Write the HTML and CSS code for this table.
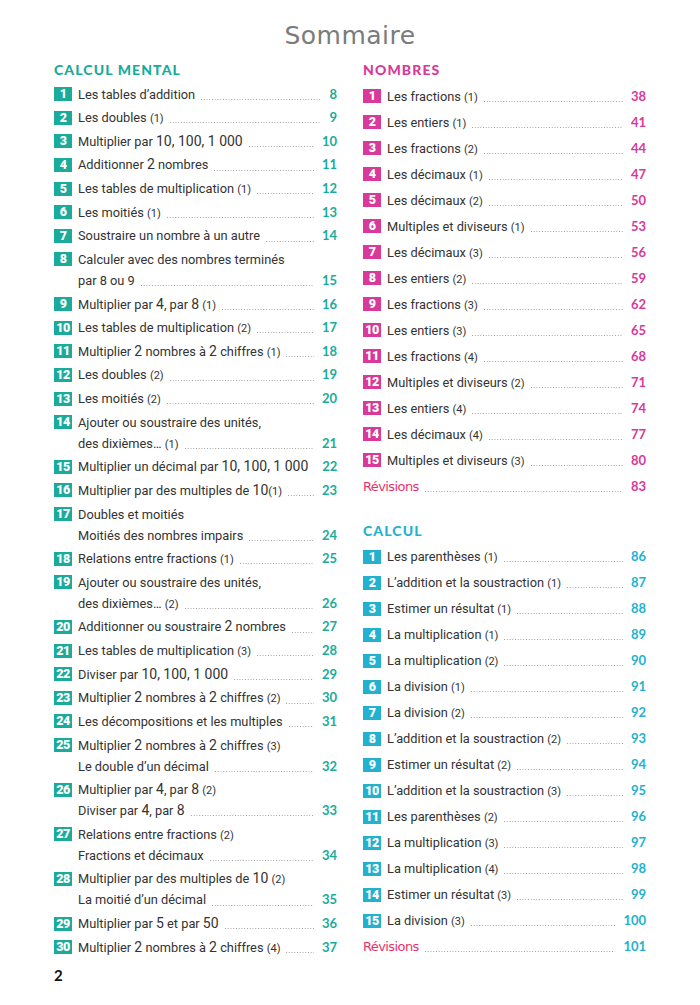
FILE: index.html
```html
<!DOCTYPE html>
<html lang="fr">
<head>
<meta charset="utf-8">
<title>Sommaire</title>
<link rel="stylesheet" href="styles.css">
</head>
<body>
<div class="page">
  <h1 class="title">Sommaire</h1>
  <div class="cols">
    <section class="col mental">
      <h2 class="head">CALCUL MENTAL</h2>
      <ul class="list">
        <li class="item"><span class="badge">1</span><div class="body"><div class="line"><span class="t">Les tables d’addition</span><span class="dots"></span><span class="pg">8</span></div></div></li>
        <li class="item"><span class="badge">2</span><div class="body"><div class="line"><span class="t">Les doubles <small>(1)</small></span><span class="dots"></span><span class="pg">9</span></div></div></li>
        <li class="item"><span class="badge">3</span><div class="body"><div class="line"><span class="t">Multiplier par <span class="n">10, 100, 1 000</span></span><span class="dots"></span><span class="pg">10</span></div></div></li>
        <li class="item"><span class="badge">4</span><div class="body"><div class="line"><span class="t">Additionner <span class="n">2</span> nombres</span><span class="dots"></span><span class="pg">11</span></div></div></li>
        <li class="item"><span class="badge">5</span><div class="body"><div class="line"><span class="t">Les tables de multiplication <small>(1)</small></span><span class="dots"></span><span class="pg">12</span></div></div></li>
        <li class="item"><span class="badge">6</span><div class="body"><div class="line"><span class="t">Les moitiés <small>(1)</small></span><span class="dots"></span><span class="pg">13</span></div></div></li>
        <li class="item"><span class="badge">7</span><div class="body"><div class="line"><span class="t">Soustraire un nombre à un autre</span><span class="dots"></span><span class="pg">14</span></div></div></li>
        <li class="item"><span class="badge">8</span><div class="body"><div class="line"><span class="t">Calculer avec des nombres terminés</span></div><div class="line"><span class="t">par 8 ou 9</span><span class="dots"></span><span class="pg">15</span></div></div></li>
        <li class="item"><span class="badge">9</span><div class="body"><div class="line"><span class="t">Multiplier par <span class="n">4</span>, par <span class="n">8</span> <small>(1)</small></span><span class="dots"></span><span class="pg">16</span></div></div></li>
        <li class="item"><span class="badge">10</span><div class="body"><div class="line"><span class="t">Les tables de multiplication <small>(2)</small></span><span class="dots"></span><span class="pg">17</span></div></div></li>
        <li class="item"><span class="badge">11</span><div class="body"><div class="line"><span class="t">Multiplier <span class="n">2</span> nombres à <span class="n">2</span> chiffres <small>(1)</small></span><span class="dots"></span><span class="pg">18</span></div></div></li>
        <li class="item"><span class="badge">12</span><div class="body"><div class="line"><span class="t">Les doubles <small>(2)</small></span><span class="dots"></span><span class="pg">19</span></div></div></li>
        <li class="item"><span class="badge">13</span><div class="body"><div class="line"><span class="t">Les moitiés <small>(2)</small></span><span class="dots"></span><span class="pg">20</span></div></div></li>
        <li class="item"><span class="badge">14</span><div class="body"><div class="line"><span class="t">Ajouter ou soustraire des unités,</span></div><div class="line"><span class="t">des dixièmes… <small>(1)</small></span><span class="dots"></span><span class="pg">21</span></div></div></li>
        <li class="item"><span class="badge">15</span><div class="body"><div class="line"><span class="t">Multiplier un décimal par <span class="n">10, 100, 1 000</span></span><span class="dots"></span><span class="pg">22</span></div></div></li>
        <li class="item"><span class="badge">16</span><div class="body"><div class="line"><span class="t">Multiplier par des multiples de <span class="n">10</span><small>(1)</small></span><span class="dots"></span><span class="pg">23</span></div></div></li>
        <li class="item"><span class="badge">17</span><div class="body"><div class="line"><span class="t">Doubles et moitiés</span></div><div class="line"><span class="t">Moitiés des nombres impairs</span><span class="dots"></span><span class="pg">24</span></div></div></li>
        <li class="item"><span class="badge">18</span><div class="body"><div class="line"><span class="t">Relations entre fractions <small>(1)</small></span><span class="dots"></span><span class="pg">25</span></div></div></li>
        <li class="item"><span class="badge">19</span><div class="body"><div class="line"><span class="t">Ajouter ou soustraire des unités,</span></div><div class="line"><span class="t">des dixièmes… <small>(2)</small></span><span class="dots"></span><span class="pg">26</span></div></div></li>
        <li class="item"><span class="badge">20</span><div class="body"><div class="line"><span class="t">Additionner ou soustraire <span class="n">2</span> nombres</span><span class="dots"></span><span class="pg">27</span></div></div></li>
        <li class="item"><span class="badge">21</span><div class="body"><div class="line"><span class="t">Les tables de multiplication <small>(3)</small></span><span class="dots"></span><span class="pg">28</span></div></div></li>
        <li class="item"><span class="badge">22</span><div class="body"><div class="line"><span class="t">Diviser par <span class="n">10, 100, 1 000</span></span><span class="dots"></span><span class="pg">29</span></div></div></li>
        <li class="item"><span class="badge">23</span><div class="body"><div class="line"><span class="t">Multiplier <span class="n">2</span> nombres à <span class="n">2</span> chiffres <small>(2)</small></span><span class="dots"></span><span class="pg">30</span></div></div></li>
        <li class="item"><span class="badge">24</span><div class="body"><div class="line"><span class="t">Les décompositions et les multiples</span><span class="dots"></span><span class="pg">31</span></div></div></li>
        <li class="item"><span class="badge">25</span><div class="body"><div class="line"><span class="t">Multiplier <span class="n">2</span> nombres à <span class="n">2</span> chiffres <small>(3)</small></span></div><div class="line"><span class="t">Le double d’un décimal</span><span class="dots"></span><span class="pg">32</span></div></div></li>
        <li class="item"><span class="badge">26</span><div class="body"><div class="line"><span class="t">Multiplier par <span class="n">4</span>, par <span class="n">8</span> <small>(2)</small></span></div><div class="line"><span class="t">Diviser par <span class="n">4</span>, par <span class="n">8</span></span><span class="dots"></span><span class="pg">33</span></div></div></li>
        <li class="item"><span class="badge">27</span><div class="body"><div class="line"><span class="t">Relations entre fractions <small>(2)</small></span></div><div class="line"><span class="t">Fractions et décimaux</span><span class="dots"></span><span class="pg">34</span></div></div></li>
        <li class="item"><span class="badge">28</span><div class="body"><div class="line"><span class="t">Multiplier par des multiples de <span class="n">10</span> <small>(2)</small></span></div><div class="line"><span class="t">La moitié d’un décimal</span><span class="dots"></span><span class="pg">35</span></div></div></li>
        <li class="item"><span class="badge">29</span><div class="body"><div class="line"><span class="t">Multiplier par <span class="n">5</span> et par <span class="n">50</span></span><span class="dots"></span><span class="pg">36</span></div></div></li>
        <li class="item"><span class="badge">30</span><div class="body"><div class="line"><span class="t">Multiplier <span class="n">2</span> nombres à <span class="n">2</span> chiffres <small>(4)</small></span><span class="dots"></span><span class="pg">37</span></div></div></li>
      </ul>
    </section>
    <section class="col right">
      <div class="block nombres">
        <h2 class="head">NOMBRES</h2>
        <ul class="list">
          <li class="item"><span class="badge">1</span><div class="body"><div class="line"><span class="t">Les fractions <small>(1)</small></span><span class="dots"></span><span class="pg">38</span></div></div></li>
          <li class="item"><span class="badge">2</span><div class="body"><div class="line"><span class="t">Les entiers <small>(1)</small></span><span class="dots"></span><span class="pg">41</span></div></div></li>
          <li class="item"><span class="badge">3</span><div class="body"><div class="line"><span class="t">Les fractions <small>(2)</small></span><span class="dots"></span><span class="pg">44</span></div></div></li>
          <li class="item"><span class="badge">4</span><div class="body"><div class="line"><span class="t">Les décimaux <small>(1)</small></span><span class="dots"></span><span class="pg">47</span></div></div></li>
          <li class="item"><span class="badge">5</span><div class="body"><div class="line"><span class="t">Les décimaux <small>(2)</small></span><span class="dots"></span><span class="pg">50</span></div></div></li>
          <li class="item"><span class="badge">6</span><div class="body"><div class="line"><span class="t">Multiples et diviseurs <small>(1)</small></span><span class="dots"></span><span class="pg">53</span></div></div></li>
          <li class="item"><span class="badge">7</span><div class="body"><div class="line"><span class="t">Les décimaux <small>(3)</small></span><span class="dots"></span><span class="pg">56</span></div></div></li>
          <li class="item"><span class="badge">8</span><div class="body"><div class="line"><span class="t">Les entiers <small>(2)</small></span><span class="dots"></span><span class="pg">59</span></div></div></li>
          <li class="item"><span class="badge">9</span><div class="body"><div class="line"><span class="t">Les fractions <small>(3)</small></span><span class="dots"></span><span class="pg">62</span></div></div></li>
          <li class="item"><span class="badge">10</span><div class="body"><div class="line"><span class="t">Les entiers <small>(3)</small></span><span class="dots"></span><span class="pg">65</span></div></div></li>
          <li class="item"><span class="badge">11</span><div class="body"><div class="line"><span class="t">Les fractions <small>(4)</small></span><span class="dots"></span><span class="pg">68</span></div></div></li>
          <li class="item"><span class="badge">12</span><div class="body"><div class="line"><span class="t">Multiples et diviseurs <small>(2)</small></span><span class="dots"></span><span class="pg">71</span></div></div></li>
          <li class="item"><span class="badge">13</span><div class="body"><div class="line"><span class="t">Les entiers <small>(4)</small></span><span class="dots"></span><span class="pg">74</span></div></div></li>
          <li class="item"><span class="badge">14</span><div class="body"><div class="line"><span class="t">Les décimaux <small>(4)</small></span><span class="dots"></span><span class="pg">77</span></div></div></li>
          <li class="item"><span class="badge">15</span><div class="body"><div class="line"><span class="t">Multiples et diviseurs <small>(3)</small></span><span class="dots"></span><span class="pg">80</span></div></div></li>
          <li class="item rev"><div class="body"><div class="line"><span class="t">Révisions</span><span class="dots"></span><span class="pg">83</span></div></div></li>
        </ul>
      </div>
      <div class="block calcul">
        <h2 class="head">CALCUL</h2>
        <ul class="list">
          <li class="item"><span class="badge">1</span><div class="body"><div class="line"><span class="t">Les parenthèses <small>(1)</small></span><span class="dots"></span><span class="pg">86</span></div></div></li>
          <li class="item"><span class="badge">2</span><div class="body"><div class="line"><span class="t">L’addition et la soustraction <small>(1)</small></span><span class="dots"></span><span class="pg">87</span></div></div></li>
          <li class="item"><span class="badge">3</span><div class="body"><div class="line"><span class="t">Estimer un résultat <small>(1)</small></span><span class="dots"></span><span class="pg">88</span></div></div></li>
          <li class="item"><span class="badge">4</span><div class="body"><div class="line"><span class="t">La multiplication <small>(1)</small></span><span class="dots"></span><span class="pg">89</span></div></div></li>
          <li class="item"><span class="badge">5</span><div class="body"><div class="line"><span class="t">La multiplication <small>(2)</small></span><span class="dots"></span><span class="pg">90</span></div></div></li>
          <li class="item"><span class="badge">6</span><div class="body"><div class="line"><span class="t">La division <small>(1)</small></span><span class="dots"></span><span class="pg">91</span></div></div></li>
          <li class="item"><span class="badge">7</span><div class="body"><div class="line"><span class="t">La division <small>(2)</small></span><span class="dots"></span><span class="pg">92</span></div></div></li>
          <li class="item"><span class="badge">8</span><div class="body"><div class="line"><span class="t">L’addition et la soustraction <small>(2)</small></span><span class="dots"></span><span class="pg">93</span></div></div></li>
          <li class="item"><span class="badge">9</span><div class="body"><div class="line"><span class="t">Estimer un résultat <small>(2)</small></span><span class="dots"></span><span class="pg">94</span></div></div></li>
          <li class="item"><span class="badge">10</span><div class="body"><div class="line"><span class="t">L’addition et la soustraction <small>(3)</small></span><span class="dots"></span><span class="pg">95</span></div></div></li>
          <li class="item"><span class="badge">11</span><div class="body"><div class="line"><span class="t">Les parenthèses <small>(2)</small></span><span class="dots"></span><span class="pg">96</span></div></div></li>
          <li class="item"><span class="badge">12</span><div class="body"><div class="line"><span class="t">La multiplication <small>(3)</small></span><span class="dots"></span><span class="pg">97</span></div></div></li>
          <li class="item"><span class="badge">13</span><div class="body"><div class="line"><span class="t">La multiplication <small>(4)</small></span><span class="dots"></span><span class="pg">98</span></div></div></li>
          <li class="item"><span class="badge">14</span><div class="body"><div class="line"><span class="t">Estimer un résultat <small>(3)</small></span><span class="dots"></span><span class="pg">99</span></div></div></li>
          <li class="item"><span class="badge">15</span><div class="body"><div class="line"><span class="t">La division <small>(3)</small></span><span class="dots"></span><span class="pg">100</span></div></div></li>
          <li class="item rev"><div class="body"><div class="line"><span class="t">Révisions</span><span class="dots"></span><span class="pg">101</span></div></div></li>
        </ul>
      </div>
    </section>
  </div>
  <div class="folio">2</div>
</div>
</body>
</html>
```

FILE: styles.css
```css
* { box-sizing: border-box; }
html, body { margin: 0; padding: 0; background: #fff; }
body {
  font-family: Roboto, "Liberation Sans", sans-serif;
  color: #333;
  width: 700px;
  height: 1005px;
  overflow: hidden;
}
.page {
  padding: 0 54px;
}
.title {
  margin: 0;
  padding-top: 20px;
  height: 60px;
  line-height: 32px;
  text-align: center;
  font-family: "DejaVu Sans", sans-serif;
  font-weight: normal;
  font-size: 25px;
  color: #7b7b7b;
  letter-spacing: 0.5px;
}
.cols {
  display: grid;
  grid-template-columns: 283px 283px;
  column-gap: 26px;
}
.head {
  margin: 0 0 3.5px 0;
  font-family: Lato, "Liberation Sans", sans-serif;
  font-weight: 900;
  font-size: 14px;
  line-height: 20px;
  letter-spacing: 1.1px;
}
.right .head { margin-bottom: 5.5px; }
.list {
  list-style: none;
  margin: 0;
  padding: 0;
  display: flex;
  flex-direction: column;
}
.mental .list { gap: 2.63px; }
.right .list { gap: 5px; }
.item {
  display: flex;
  align-items: flex-start;
  gap: 6px;
}
.badge {
  flex: 0 0 18px;
  height: 14px;
  margin-top: 3.5px;
  color: #fff;
  font-family: Roboto, sans-serif;
  font-weight: 900;
  font-size: 12.5px;
  line-height: 14px;
  text-align: center;
  letter-spacing: -0.6px;
}
.body {
  flex: 1;
  min-width: 0;
}
.line {
  display: flex;
  align-items: flex-end;
  height: 21px;
  font-size: 12.8px;
  line-height: 21px;
  white-space: nowrap;
}
.t { line-height: 21px; }
.t small { font-size: 11px; line-height: 1; }
.n { font-size: 14px; line-height: 1; }
.dots {
  flex: 1;
  height: 1.2px;
  margin: 0 8px 4.5px 6px;
  background-image: linear-gradient(90deg, #a0a0a0 0 1.1px, transparent 1.1px);
  background-size: 2.75px 1.2px;
  background-repeat: repeat-x;
}
.pg {
  font-family: Lato, "Liberation Sans", sans-serif;
  font-weight: 700;
  font-size: 13px;
  line-height: 21px;
}

/* colour themes */
.mental .head, .mental .pg { color: #1aab9b; }
.mental .badge { background: #1aab9b; }
.nombres .head, .nombres .pg { color: #d8399a; }
.nombres .badge { background: #d8399a; }
.calcul .head, .calcul .pg { color: #22b2cf; }
.calcul .badge { background: #22b2cf; }

.rev .t {
  font-family: "DejaVu Sans", sans-serif;
  font-size: 13px;
  color: #e8336c;
  letter-spacing: -0.6px;
}
.calcul { margin-top: 24px; }

.folio {
  margin-top: 8px;
  font-family: Lato, "Liberation Sans", sans-serif;
  font-weight: 700;
  font-size: 15px;
  line-height: 18px;
  color: #111;
}
```
